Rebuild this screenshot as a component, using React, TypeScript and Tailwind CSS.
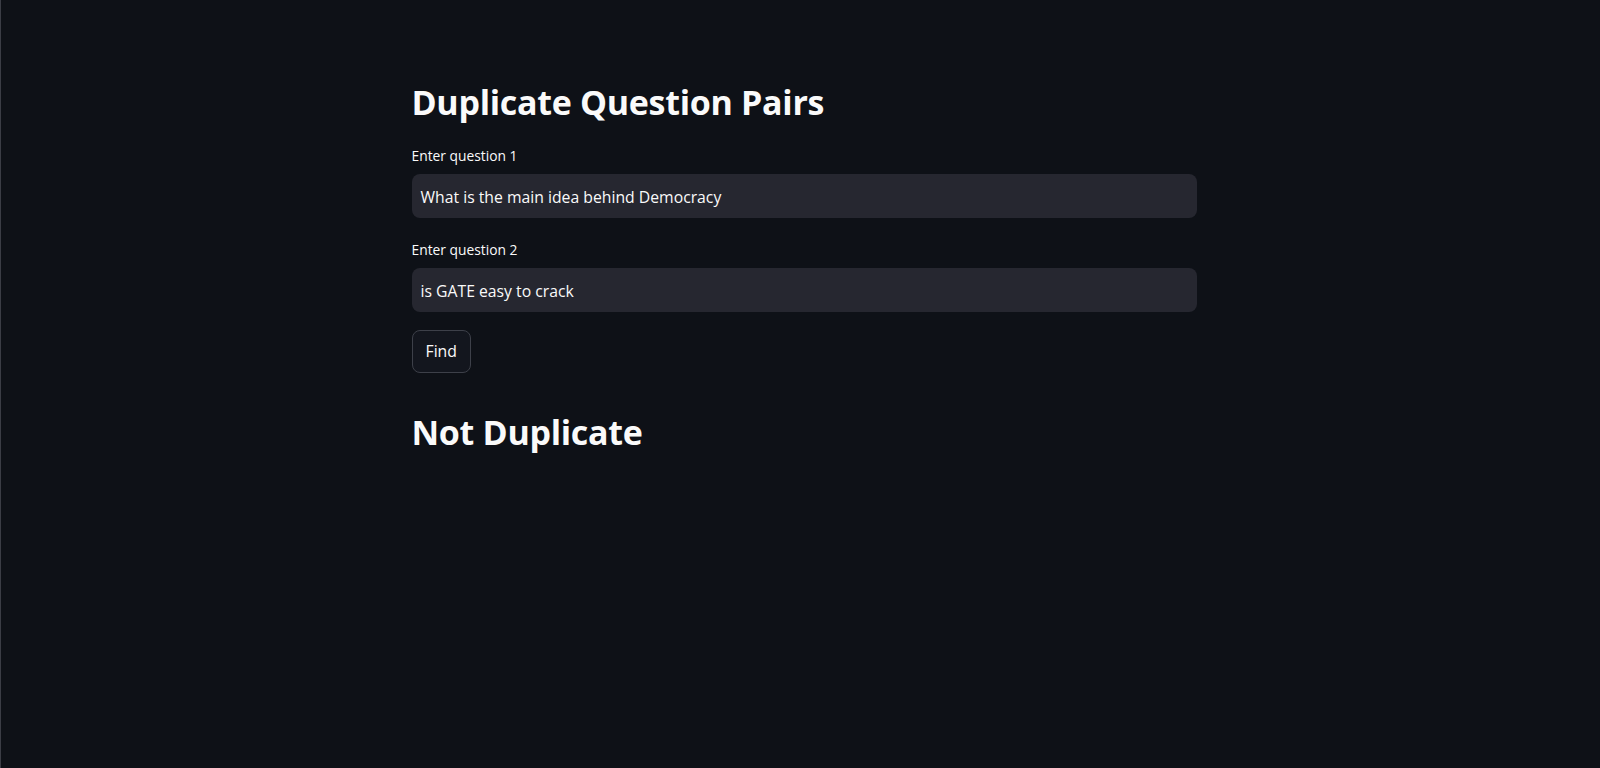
export default function App() {
  return (
    <div className="min-h-screen h-[768px] bg-[#0e1117] border-l border-[#3b3d45] pl-[7px] text-[#fafafa] font-['Open_Sans','Noto_Sans',sans-serif] overflow-hidden">
      <div className="mx-auto w-[785px] pt-[80px]">
        <h1 className="text-[34px] leading-[44px] font-bold tracking-[-0.3px]">
          Duplicate Question Pairs
        </h1>

        <div className="mt-[22px]">
          <label className="block text-[13.8px] leading-[20px] mb-[8px]">
            Enter question 1
          </label>
          <div className="h-[44px] rounded-[8px] bg-[#262730] flex items-center px-[9px] pt-[4px] text-[15.75px]">
            What is the main idea behind Democracy
          </div>
        </div>

        <div className="mt-[22px]">
          <label className="block text-[13.8px] leading-[20px] mb-[8px]">
            Enter question 2
          </label>
          <div className="h-[44px] rounded-[8px] bg-[#262730] flex items-center px-[9px] pt-[4px] text-[15.75px]">
            is GATE easy to crack
          </div>
        </div>

        <button className="mt-[18px] h-[43px] px-[13px] rounded-[8px] border border-[#3d4049] bg-[#13161e] text-[15.75px]">
          Find
        </button>

        <h2 className="mt-[37px] text-[34px] leading-[44px] font-bold tracking-[-0.3px]">
          Not Duplicate
        </h2>
      </div>
    </div>
  );
}
